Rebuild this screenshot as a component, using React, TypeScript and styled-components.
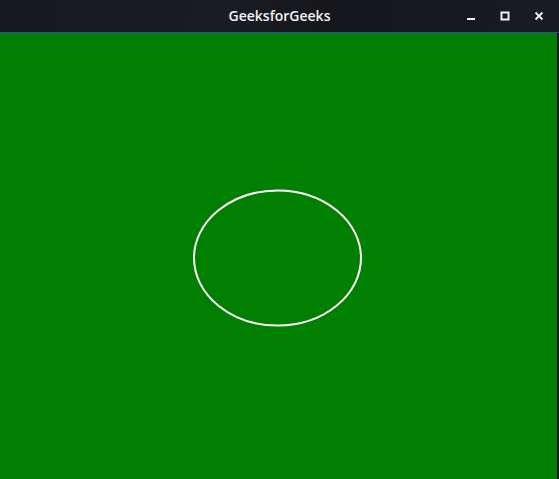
import React from "react";
import styled, { createGlobalStyle } from "styled-components";

const Global = createGlobalStyle`
  html, body { margin: 0; padding: 0; background: #15161c; }
  #root { width: 559px; height: 479px; overflow: hidden; }
`;

const Window = styled.div`
  width: 559px;
  height: 479px;
  display: flex;
  flex-direction: column;
  background: #15161c;
`;

const TitleBar = styled.div`
  height: 32px;
  flex: none;
  display: grid;
  grid-template-columns: 1fr auto 1fr;
  align-items: center;
  background: linear-gradient(100deg, #181920 0%, #1b1c23 40%, #16171d 60%, #1a1b22 100%);
  color: #eef2f2;
  font-family: "Open Sans", "Noto Sans", sans-serif;
  font-size: 14px;
  font-weight: 600;
`;

const Title = styled.div`
  grid-column: 2;
  padding-bottom: 1px;
`;

const Controls = styled.div`
  grid-column: 3;
  justify-self: end;
  display: flex;
  align-items: center;
  padding-right: 3px;
`;

const CtrlButton = styled.div`
  width: 34px;
  height: 32px;
  display: flex;
  align-items: center;
  justify-content: center;
`;

const BlueLine = styled.div`
  height: 1px;
  flex: none;
  background: #2d4fa8;
`;

const Body = styled.div`
  flex: 1;
  display: flex;
`;

const Canvas = styled.div`
  flex: 1;
  background: #007f00;
`;

const Edge = styled.div`
  width: 2px;
  flex: none;
  background: #15161c;
`;

export default function App() {
  return (
    <Window>
      <Global />
      <TitleBar>
        <Title>GeeksforGeeks</Title>
        <Controls>
          <CtrlButton>
            <svg width="10" height="10" viewBox="0 0 10 10">
              <rect x="1" y="7" width="8" height="2" fill="#e8f5ee" />
            </svg>
          </CtrlButton>
          <CtrlButton>
            <svg width="10" height="10" viewBox="0 0 10 10">
              <rect x="1.5" y="1.5" width="7" height="7" fill="none" stroke="#e8f5ee" strokeWidth="2" />
            </svg>
          </CtrlButton>
          <CtrlButton>
            <svg width="10" height="10" viewBox="0 0 10 10">
              <path d="M1.5 1.5 L8.5 8.5 M8.5 1.5 L1.5 8.5" stroke="#e8f5ee" strokeWidth="1.8" />
            </svg>
          </CtrlButton>
        </Controls>
      </TitleBar>
      <BlueLine />
      <Body>
        <Canvas>
          <svg width="557" height="446" viewBox="0 0 557 446">
            <ellipse cx="277.5" cy="225" rx="83.5" ry="67.5" fill="none" stroke="#ffffff" strokeWidth="2" />
          </svg>
        </Canvas>
        <Edge />
      </Body>
    </Window>
  );
}
